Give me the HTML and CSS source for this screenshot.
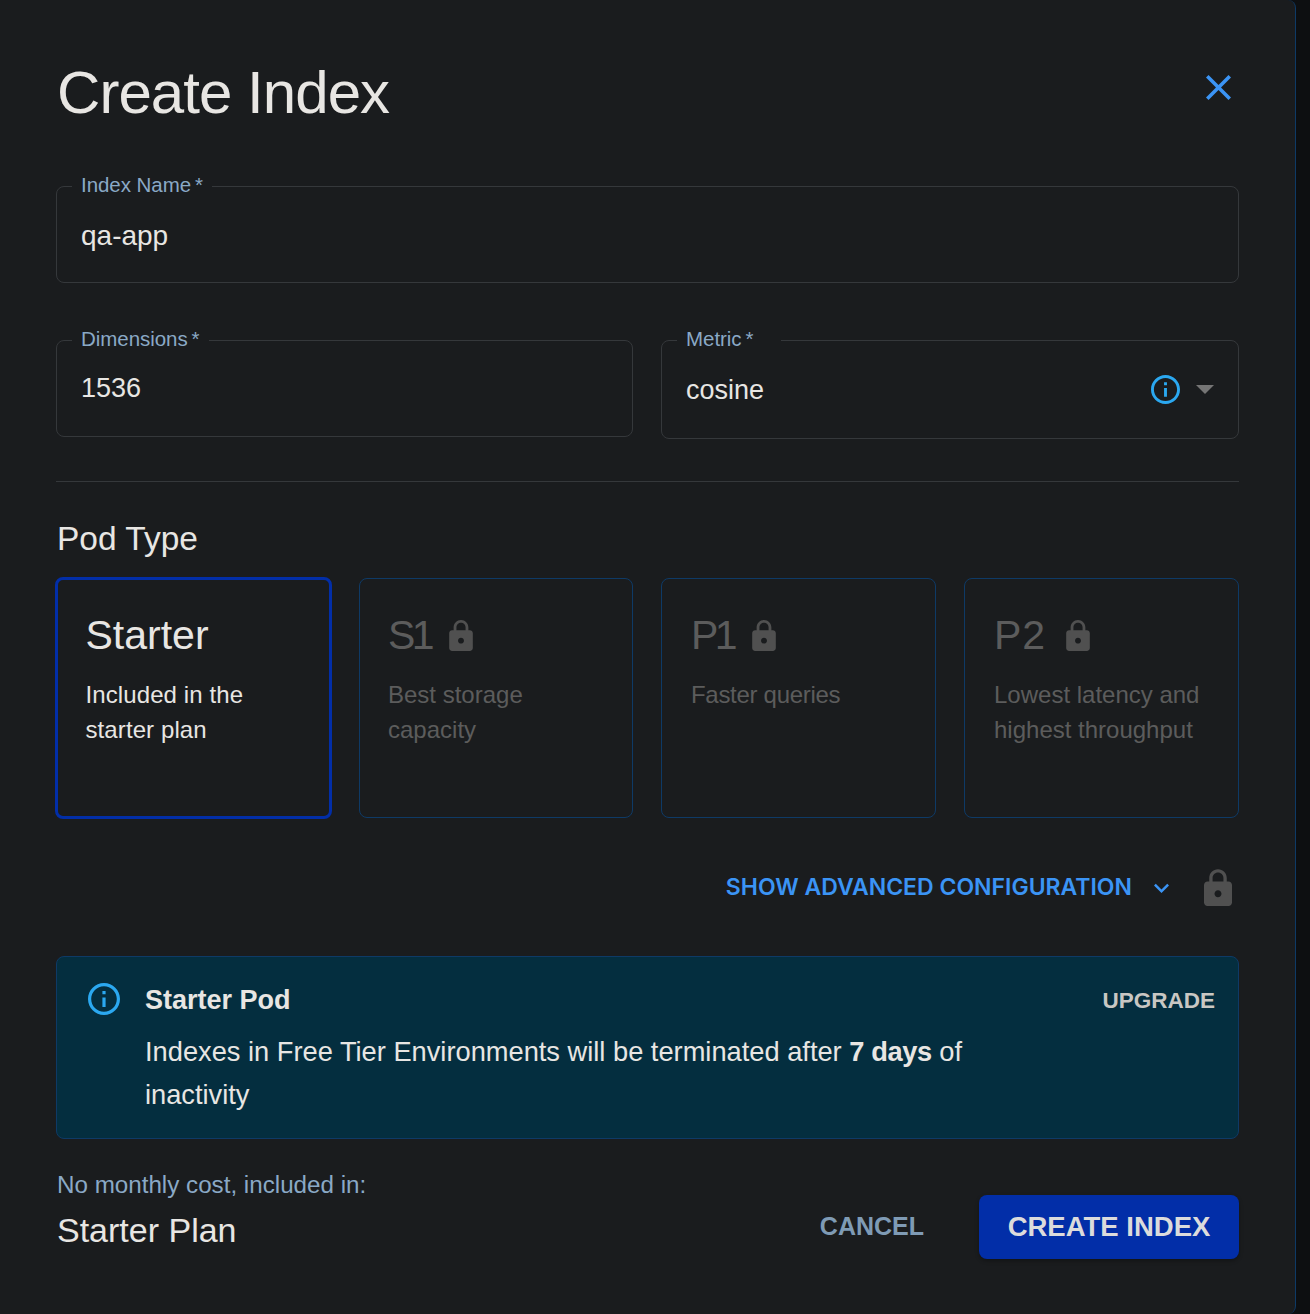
FILE: index.html
```html
<!DOCTYPE html>
<html lang="en">
<head>
    <meta charset="UTF-8">
    <title>Create Index</title>
    <link rel="stylesheet" href="styles.css">
</head>
<body>
    <div class="dialog">
        <div class="dialog-head">
            <h1>Create Index</h1>
            <svg class="close-icon" viewBox="5 5 14 14"><path d="M19 6.41 17.59 5 12 10.59 6.41 5 5 6.41 10.59 12 5 17.59 6.41 19 12 13.41 17.59 19 19 17.59 13.41 12z"/></svg>
        </div>

        <fieldset class="field field-full">
            <legend>Index Name<span class="req">*</span></legend>
            <div class="field-value">qa-app</div>
        </fieldset>

        <div class="field-row">
            <fieldset class="field">
                <legend>Dimensions<span class="req">*</span></legend>
                <div class="field-value">1536</div>
            </fieldset>
            <fieldset class="field field-select">
                <legend class="legend-wide">Metric<span class="req">*</span></legend>
                <div class="field-value select-value">
                    <span>cosine</span>
                    <svg class="metric-info" viewBox="2 2 20 20"><path d="M11 7h2v2h-2zm0 4h2v6h-2zm1-9C6.48 2 2 6.48 2 12s4.48 10 10 10 10-4.48 10-10S17.52 2 12 2zm0 18c-4.41 0-8-3.59-8-8s3.59-8 8-8 8 3.59 8 8-3.59 8-8 8z"/></svg>
                    <span class="caret"></span>
                </div>
            </fieldset>
        </div>

        <hr class="divider">

        <h2>Pod Type</h2>
        <div class="pods">
            <div class="pod pod-selected">
                <div class="pod-title">Starter</div>
                <p>Included in the starter plan</p>
            </div>
            <div class="pod pod-locked">
                <div class="pod-title pod-title-tight">S1
                    <svg class="lock-small" viewBox="4 1 16 21"><use href="#lock"/></svg>
                </div>
                <p>Best storage capacity</p>
            </div>
            <div class="pod pod-locked">
                <div class="pod-title pod-title-tight">P1
                    <svg class="lock-small" viewBox="4 1 16 21"><use href="#lock"/></svg>
                </div>
                <p class="tight-text">Faster queries</p>
            </div>
            <div class="pod pod-locked">
                <div class="pod-title pod-title-wide">P2
                    <svg class="lock-small" viewBox="4 1 16 21"><use href="#lock"/></svg>
                </div>
                <p>Lowest latency and highest throughput</p>
            </div>
        </div>

        <div class="advanced">
            <span class="advanced-link">SHOW ADVANCED CONFIGURATION</span>
            <svg class="chevron" viewBox="6 8 12 8" preserveAspectRatio="none"><path d="M16.59 8.59 12 13.17 7.41 8.59 6 10l6 6 6-6z"/></svg>
            <svg class="lock-big" viewBox="4 1 16 21"><use href="#lock"/></svg>
        </div>

        <div class="alert">
            <svg class="alert-icon" viewBox="2 2 20 20"><path d="M11 7h2v2h-2zm0 4h2v6h-2zm1-9C6.48 2 2 6.48 2 12s4.48 10 10 10 10-4.48 10-10S17.52 2 12 2zm0 18c-4.41 0-8-3.59-8-8s3.59-8 8-8 8 3.59 8 8-3.59 8-8 8z"/></svg>
            <div class="alert-body">
                <div class="alert-title">Starter Pod</div>
                <p>Indexes in Free Tier Environments will be terminated after <strong>7 days</strong> of<br>inactivity</p>
            </div>
            <span class="alert-action">UPGRADE</span>
        </div>

        <div class="dialog-foot">
            <div class="plan">
                <div class="plan-label">No monthly cost, included in:</div>
                <div class="plan-name">Starter Plan</div>
            </div>
            <span class="btn-cancel">CANCEL</span>
            <span class="btn-create">CREATE INDEX</span>
        </div>
    </div>

    <svg class="sprite" width="0" height="0">
        <defs>
            <path id="lock" d="M18 8h-1V6c0-2.76-2.24-5-5-5S7 3.24 7 6v2H6c-1.1 0-2 .9-2 2v10c0 1.1.9 2 2 2h12c1.1 0 2-.9 2-2V10c0-1.1-.9-2-2-2zm-6 9c-1.1 0-2-.9-2-2s.9-2 2-2 2 .9 2 2-.9 2-2 2zm3.1-9H8.9V6c0-1.71 1.39-3.1 3.1-3.1 1.71 0 3.1 1.39 3.1 3.1v2z"/>
        </defs>
    </svg>
</body>
</html>
```

FILE: styles.css
```css
html, body {
    margin: 0;
    height: 1314px;
    overflow: hidden;
    background-color: #0d0f11;
}
body {
    font-family: "Liberation Sans", Arial, sans-serif;
    color: #e8e6e3;
}
.dialog {
    box-sizing: border-box;
    width: 1296px;
    height: 1314px;
    padding: 0 56px;
    background-color: #1a1c1e;
    border-right: 1px solid #0e3a66;
    border-radius: 0 8px 8px 0;
}
.dialog-head {
    display: flex;
    justify-content: space-between;
    align-items: center;
    height: 175px;
}
h1 {
    margin: 9px 0 0 1px;
    font-size: 60px;
    font-weight: 400;
    letter-spacing: -0.95px;
}
.close-icon {
    width: 25px;
    height: 25px;
    margin-right: 8px;
    fill: #3b94f5;
}
.field {
    box-sizing: border-box;
    min-width: 0;
    margin: 0;
    padding: 0 24px;
    height: 108px;
    border: 1px solid #35383b;
    border-radius: 8px;
}
.field legend {
    padding: 0 9px;
    margin-left: -9px;
    height: 22px;
    font-size: 20.5px;
    line-height: 20px;
    color: #8aa9c6;
    letter-spacing: -0.05px;
}
.field .legend-wide {
    padding-right: 28px;
}
.req {
    margin-left: 4px;
}
.field-value {
    display: flex;
    align-items: center;
    height: 74px;
    font-size: 27px;
}
.field-full {
    width: 1183px;
}
.field-full .field-value {
    height: 78px;
    font-size: 28px;
}
.field-row {
    display: grid;
    grid-template-columns: 577px 578px;
    gap: 28px;
    margin-top: 46px;
}
.field-select {
    height: 110px;
}
.select-value {
    height: 78px;
}
.select-value span:first-child {
    flex: 1;
}
.metric-info {
    width: 29px;
    height: 29px;
    margin-bottom: 2px;
    fill: #2ba8f0;
}
.caret {
    width: 0;
    height: 0;
    margin: 0 0 2px 16px;
    border-left: 9px solid transparent;
    border-right: 9px solid transparent;
    border-top: 9px solid #757575;
}
.divider {
    margin: 42px 0 0;
    border: 0;
    border-top: 1px solid #35383b;
}
h2 {
    margin: 36px 0 0 1px;
    font-size: 33.5px;
    line-height: 41px;
    font-weight: 400;
}
.pods {
    display: grid;
    grid-template-columns: 275px 274px 275px 275px;
    gap: 28px;
    margin-top: 19px;
}
.pod {
    box-sizing: border-box;
    height: 240px;
    padding: 30px 28px;
    border: 1px solid #0e3a66;
    border-radius: 8px;
}
.pod:nth-child(n+3) {
    padding-left: 29px;
}
.pod-selected {
    margin: -1px;
    height: 242px;
    padding: 29px 27.5px;
    border: 3px solid #022ea8;
}
.pod-selected p {
    letter-spacing: 0.1px;
}
.pod-title {
    display: flex;
    align-items: center;
    gap: 18px;
    height: 52px;
    font-size: 41px;
    line-height: 52px;
}
.pod-title-tight {
    gap: 18px;
    letter-spacing: -3.5px;
}
.pod-title-wide {
    gap: 20px;
    letter-spacing: 1px;
}
.pod p {
    margin: 16px 0 0;
    font-size: 24px;
    line-height: 35px;
}
.pod p.tight-text {
    letter-spacing: -0.3px;
}
.pod-locked {
    color: #5c5c5c;
}
.lock-small {
    width: 24px;
    height: 31px;
    fill: #505050;
}
.advanced {
    display: flex;
    justify-content: flex-end;
    align-items: center;
    height: 60px;
    margin-top: 39px;
    padding-right: 7px;
}
.advanced-link {
    font-family: Inter, "Liberation Sans", sans-serif;
    font-size: 23px;
    font-weight: 600;
    color: #3b94f5;
}
.chevron {
    width: 15px;
    height: 10px;
    margin: 2px 35px 0 22px;
    fill: #3b94f5;
}
.lock-big {
    width: 28px;
    height: 37px;
    fill: #505050;
}
.alert {
    display: flex;
    box-sizing: border-box;
    height: 183px;
    margin-top: 39px;
    padding: 26px 23px 0 31px;
    background-color: #042e3f;
    border: 1px solid #0e3a66;
    border-radius: 8px;
}
.alert-icon {
    flex: none;
    width: 32px;
    height: 32px;
    fill: #2ba8f0;
}
.alert-body {
    width: 830px;
    margin-left: 25px;
}
.alert-title {
    font-size: 27px;
    line-height: 34px;
    font-weight: 700;
}
.alert-body p {
    margin: 13px 0 0;
    font-size: 27.25px;
    line-height: 43px;
}
.alert-body strong {
    letter-spacing: -0.4px;
}
.alert-action {
    margin-left: auto;
    margin-top: 5px;
    font-size: 22.5px;
    font-weight: 700;
    color: #c9c7c3;
}
.dialog-foot {
    display: flex;
    align-items: flex-start;
    margin-top: 29px;
}
.plan {
    flex: 1;
    margin-left: 1px;
}
.plan-label {
    font-size: 24.2px;
    line-height: 34px;
    color: #8aa9c6;
}
.plan-name {
    margin-top: 6px;
    font-size: 34px;
    line-height: 44px;
}
.btn-cancel {
    margin: 43px 55px 0 0;
    font-size: 25px;
    line-height: 30px;
    font-weight: 700;
    color: #7f9bb5;
}
.btn-create {
    box-sizing: border-box;
    width: 260px;
    height: 64px;
    margin-top: 27px;
    font-size: 27.5px;
    line-height: 64px;
    font-weight: 700;
    text-align: center;
    color: #dcdcdc;
    background-color: #022ea8;
    border-radius: 8px;
    box-shadow: 0 2px 4px rgba(0, 0, 0, 0.3);
}
.sprite {
    position: absolute;
}
```
